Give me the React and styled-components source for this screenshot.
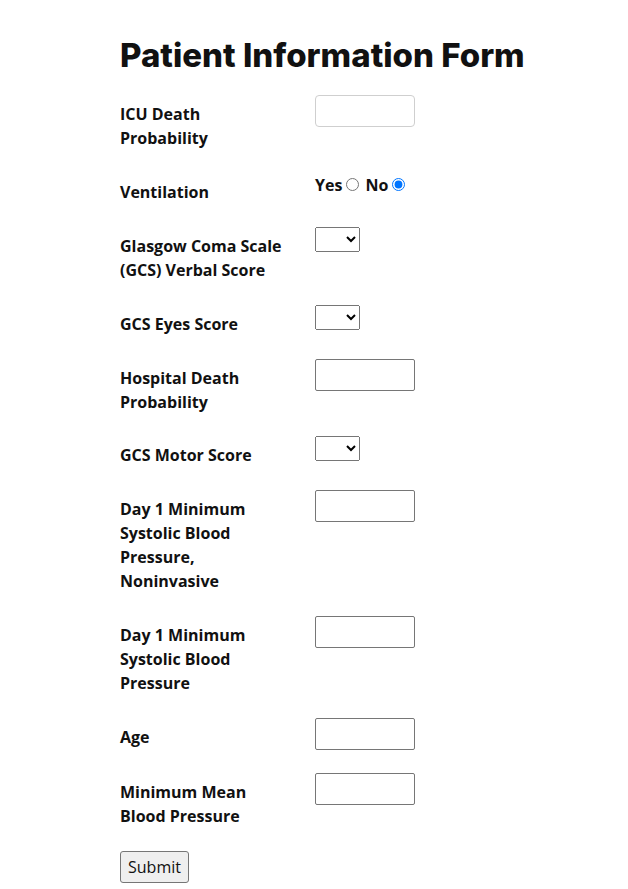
import React from "react";
import styled, { createGlobalStyle } from "styled-components";

const Global = createGlobalStyle`
  html, body { margin: 0; padding: 0; background: #fff; }
  body { font-family: "Open Sans", "Liberation Sans", sans-serif; color: #111; }
`;

const Page = styled.div`
  width: 388px;
  margin: 0 auto;
  padding-top: 35px;
`;

const Title = styled.h1`
  margin: 0 0 20px;
  font-family: Inter, "Liberation Sans", sans-serif;
  font-weight: 800;
  font-size: 33px;
  line-height: 40px;
  white-space: nowrap;
  color: #111;
`;

const Form = styled.form`
  display: flex;
  flex-direction: column;
  align-items: flex-start;
`;

const Row = styled.div`
  display: flex;
  align-items: flex-start;
  margin-bottom: 22.9px;
`;

const Label = styled.label`
  width: 165px;
  margin-right: 30px;
  padding-top: 7px;
  font-weight: 700;
  font-size: 16px;
  line-height: 24px;
`;

const TextInput = styled.input`
  box-sizing: border-box;
  width: 100px;
  height: 32px;
  margin: 0;
  border: 1px solid ${(p) => (p.$soft ? "#cfcfcf" : "#767676")};
  border-radius: ${(p) => (p.$soft ? "4px" : "2px")};
  background: #fff;
  font: 16px "Open Sans", sans-serif;
`;

const Select = styled.select`
  box-sizing: border-box;
  width: 45px;
  height: 25px;
  margin: 0;
  font: 13px "Open Sans", sans-serif;
`;

const Radios = styled.div`
  display: flex;
  font-weight: 700;
  font-size: 16px;
  line-height: 24px;
`;

const RadioLabel = styled.label`
  input { margin: 3px 6px 0 4px; }
`;

const Submit = styled.button`
  box-sizing: border-box;
  height: 32px;
  padding: 0 7px;
  font: 16px "Open Sans", sans-serif;
  color: #111;
  background: #efefef;
  border: 1px solid #767676;
  border-radius: 3px;
`;

const fields = [
  { label: "ICU Death Probability", kind: "text", soft: true },
  { label: "Ventilation", kind: "radio" },
  { label: "Glasgow Coma Scale (GCS) Verbal Score", kind: "select" },
  { label: "GCS Eyes Score", kind: "select" },
  { label: "Hospital Death Probability", kind: "text" },
  { label: "GCS Motor Score", kind: "select" },
  { label: "Day 1 Minimum Systolic Blood Pressure, Noninvasive", kind: "text" },
  { label: "Day 1 Minimum Systolic Blood Pressure", kind: "text" },
  { label: "Age", kind: "text" },
  { label: "Minimum Mean Blood Pressure", kind: "text" },
];

export default function App() {
  return (
    <Page>
      <Global />
      <Title>Patient Information Form</Title>
      <Form onSubmit={(e) => e.preventDefault()}>
        {fields.map((f, i) => (
          <Row key={i}>
            <Label>{f.label}</Label>
            {f.kind === "text" && <TextInput type="text" $soft={f.soft} />}
            {f.kind === "select" && (
              <Select defaultValue="">
                <option value=""></option>
              </Select>
            )}
            {f.kind === "radio" && (
              <Radios>
                <RadioLabel>
                  Yes<input type="radio" name="vent" value="yes" />
                </RadioLabel>
                <RadioLabel>
                  No<input type="radio" name="vent" value="no" defaultChecked />
                </RadioLabel>
              </Radios>
            )}
          </Row>
        ))}
        <Submit type="submit">Submit</Submit>
      </Form>
    </Page>
  );
}
